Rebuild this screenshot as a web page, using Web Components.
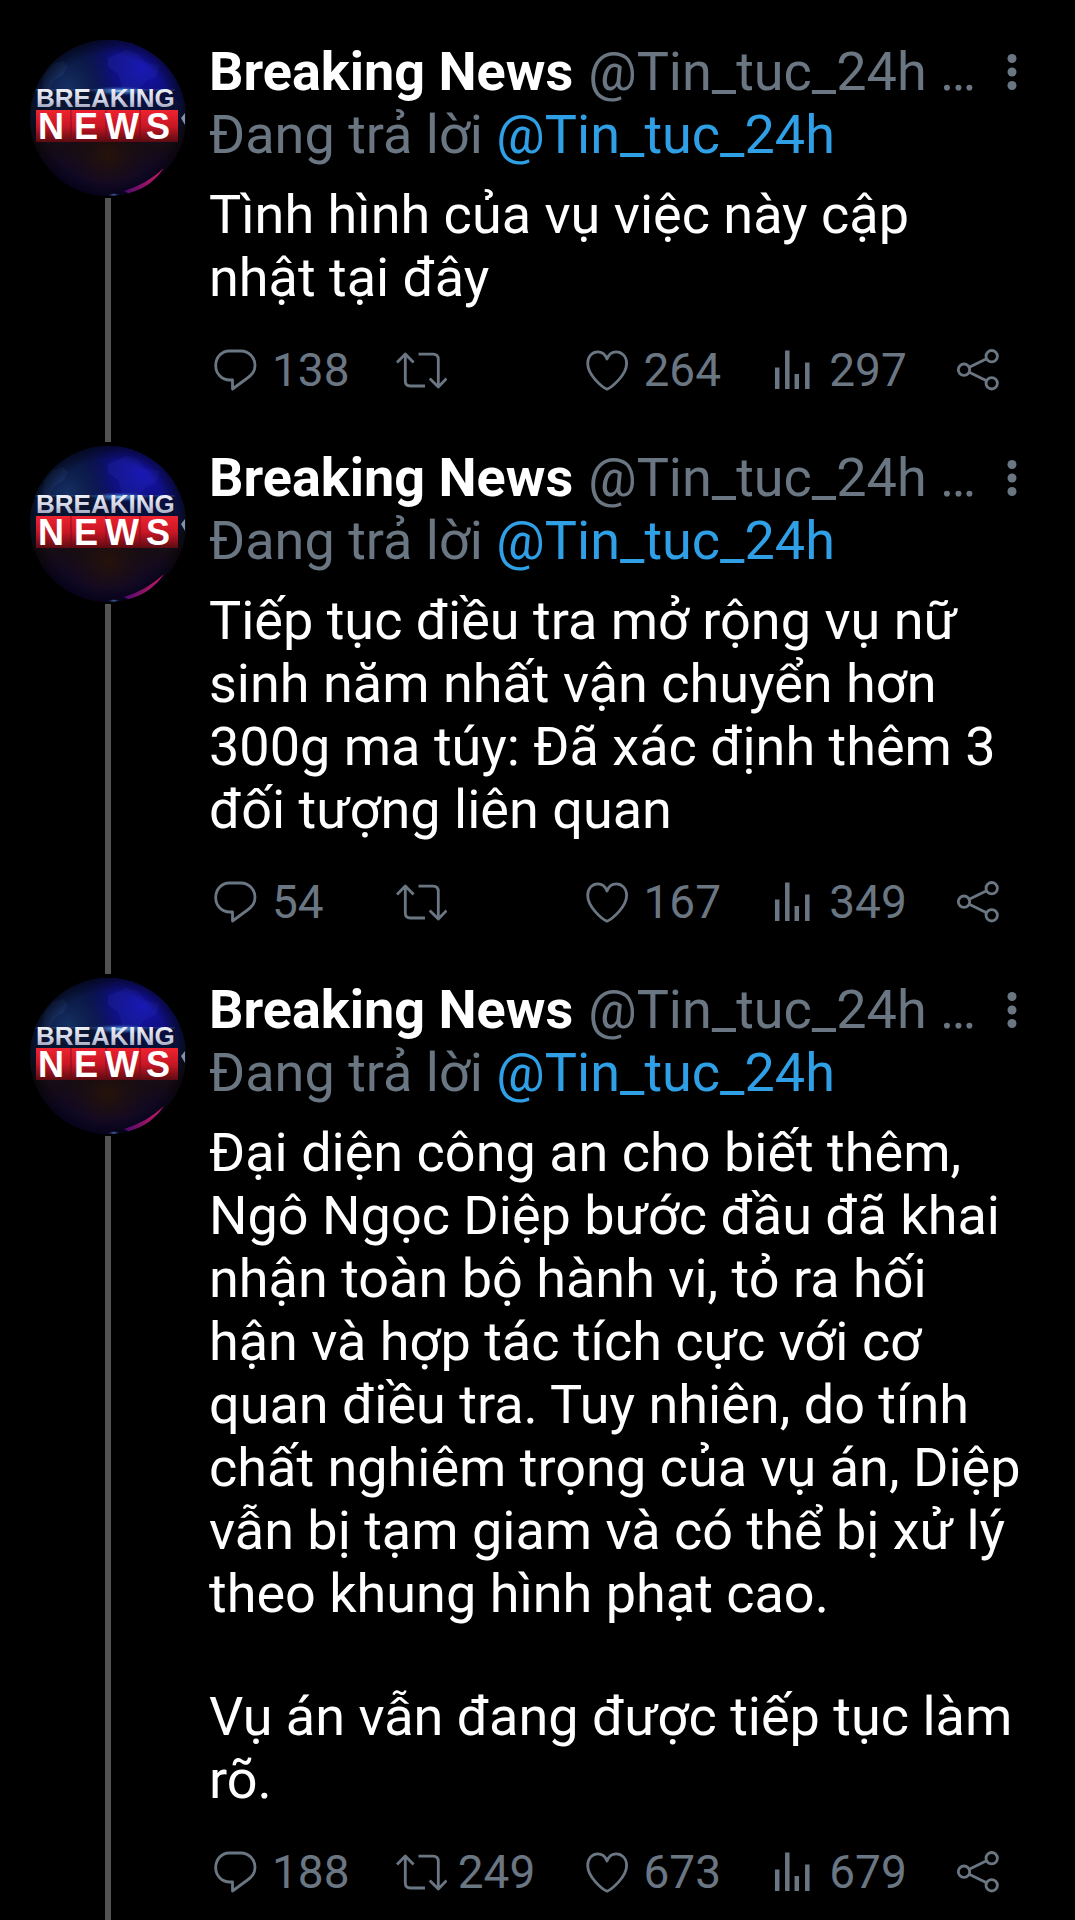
<!DOCTYPE html>
<html lang="vi">
<head>
<meta charset="utf-8">
<meta name="viewport" content="width=device-width, initial-scale=1">
<title>Breaking News</title>
<style>
body {
  --muted: #6b7683;
  --link: #2f9fe6;
  --thread: #525252;
  margin: 0;
  background: #000;
  color: #fff;
  font-family: Roboto, "Noto Sans", sans-serif;
  font-size: 54px;
  line-height: 63px;
}
p { margin: 0; }
p + p { margin-top: 60px; }
</style>
</head>
<body>
<tweet-thread>
  <tweet-item replies="138" likes="264" views="297">
    <p>Tình hình của vụ việc này cập nhật tại đây</p>
  </tweet-item>
  <tweet-item replies="54" likes="167" views="349">
    <p>Tiếp tục điều tra mở rộng vụ nữ sinh năm nhất vận chuyển hơn 300g ma túy: Đã xác định thêm 3 đối tượng liên quan</p>
  </tweet-item>
  <tweet-item replies="188" retweets="249" likes="673" views="679">
    <p>Đại diện công an cho biết thêm, Ngô Ngọc Diệp bước đầu đã khai nhận toàn bộ hành vi, tỏ ra hối hận và hợp tác tích cực với cơ quan điều tra. Tuy nhiên, do tính chất nghiêm trọng của vụ án, Diệp vẫn bị tạm giam và có thể bị xử lý theo khung hình phạt cao.</p>
    <p>Vụ án vẫn đang được tiếp tục làm rõ.</p>
  </tweet-item>
</tweet-thread>

<script>
const ICONS = {
  reply: '<path d="M20 7h12c8 0 14 6.500 14 14.500c0 5.500-2.500 9-7.500 12.500L23.500 45V36H21C12.500 36 6.700 29.500 6.700 21.500S12.500 7 20 7z"/>',
  retweet: '<path d="M2 18.500L10.300 10l8.300 8.500M10.300 10v27q0 5 5 5H30M23.500 10.200H38q5.300 0 5.300 5.300V43M34.700 34.500L43.300 43l8.300-8.500"/>',
  like: '<path d="M26 45.200C21 43 6.700 31 6.700 19.500C6.700 12 11.500 7.900 16.800 7.900C21 7.900 24.500 11 26 15C27.500 11 31 7.900 35.200 7.900C40.500 7.900 45.600 12 45.600 19.500C45.600 31 31 43 26 45.200z"/>',
  views: '<path stroke-width="4.500" d="M11.200 23.500V45M21.300 6.500V45M30.800 30V45M41.300 18.500V45"/>',
  share: '<circle cx="12" cy="25.700" r="5.700"/><circle cx="39.700" cy="12.200" r="5.700"/><circle cx="39.700" cy="39.300" r="5.700"/><path d="M17.200 23.200L34.600 14.700M17.200 28.200L34.600 36.800"/>',
};

const LABELS = {
  reply: 'Trả lời', retweet: 'Tweet lại', like: 'Thích',
  views: 'Lượt xem', share: 'Chia sẻ',
};

class NewsAvatar extends HTMLElement {
  constructor() {
    super();
    this.attachShadow({ mode: 'open' }).innerHTML = `<style>
:host { display: block; width: 156px; height: 156px; border-radius: 50%; overflow: hidden; }
svg { display: block; width: 100%; height: 100%; }
.top { font: bold 26px "Liberation Sans", sans-serif; }
.bottom { font: bold 36px "Liberation Sans", sans-serif; text-anchor: middle; }
</style>
<svg viewBox="0 0 156 156" role="img" aria-label="Breaking News">
  <defs>
    <linearGradient id="sky" x1="0" y1="0" x2="0" y2="1">
      <stop offset="0" stop-color="#081242"/><stop offset=".42" stop-color="#0b1a40"/>
      <stop offset=".68" stop-color="#160c14"/><stop offset="1" stop-color="#08033c"/>
    </linearGradient>
    <radialGradient id="blue" cx=".72" cy=".18" r=".42">
      <stop offset="0" stop-color="#1612b4"/><stop offset=".5" stop-color="#100e88" stop-opacity=".8"/><stop offset="1" stop-color="#0a0a50" stop-opacity="0"/>
    </radialGradient>
    <radialGradient id="brown" cx=".5" cy=".74" r=".34">
      <stop offset="0" stop-color="#25120a"/><stop offset="1" stop-color="#180c14" stop-opacity="0"/>
    </radialGradient>
    <radialGradient id="teal" cx=".24" cy=".3" r=".3">
      <stop offset="0" stop-color="#18366c" stop-opacity=".8"/><stop offset="1" stop-color="#0c1c48" stop-opacity="0"/>
    </radialGradient>
    <radialGradient id="edge">
      <stop offset=".82" stop-opacity="0"/><stop offset="1" stop-opacity=".5"/>
    </radialGradient>
    <radialGradient id="flare">
      <stop offset="0" stop-color="#b8e4ff"/><stop offset=".3" stop-color="#5c98e0" stop-opacity=".7"/><stop offset="1" stop-color="#2048a0" stop-opacity="0"/>
    </radialGradient>
    <linearGradient id="red" x1="0" y1="0" x2="0" y2="1">
      <stop offset="0" stop-color="#ee2330"/><stop offset=".5" stop-color="#c91725"/><stop offset="1" stop-color="#5c0b12"/>
    </linearGradient>
    <linearGradient id="steel" x1="0" y1="0" x2="0" y2="1">
      <stop offset="0" stop-color="#fff"/><stop offset=".6" stop-color="#ccd0e2"/><stop offset="1" stop-color="#8286a6"/>
    </linearGradient>
    <linearGradient id="rim"><stop offset="0" stop-color="#4a0a70"/><stop offset="1" stop-color="#d01c58"/></linearGradient>
  </defs>
  <rect width="156" height="156" fill="url(#sky)"/>
  <rect width="156" height="156" fill="url(#blue)"/>
  <rect width="156" height="156" fill="url(#teal)"/>
  <rect width="156" height="156" fill="url(#brown)"/>
  <path d="M15 34l8-10 10-3 5 5-5 9-8 5-7 11-7 1z" fill="#2c4d80" opacity=".25"/>
  <path d="M78 18l18-8 12 3 8 10 14 2-4 12-10 4-7 8H93l-5-15-10-7z" fill="#2430b8" opacity=".25"/>
  <rect width="156" height="156" fill="url(#edge)"/>
  <rect x="5" y="50" width="140" height="20" fill="#081025" opacity=".65"/>
  <path d="M5 50h140" stroke="#496ea6" opacity=".5"/>
  <ellipse cx="90" cy="51" rx="32" ry="5" fill="url(#flare)"/>
  <text class="top" x="6" y="67" fill="url(#steel)">BREAKING</text>
  <path d="M6 70h142v32H6z" fill="url(#red)"/>
  <path d="M41 70v32M76 70v32M110 70v32" stroke="#650c16" opacity=".7"/>
  <text class="bottom" x="21 56 92 128" y="99" fill="#fff">NEWS</text>
  <path d="M151 78l4-5v12z" fill="#8490ad"/>
  <path d="M94 151q23-7 40-23q-12 18-34 26z" fill="url(#rim)"/>
  <ellipse cx="84" cy="155" rx="6" ry="2" fill="url(#flare)" opacity=".7"/>
</svg>`;
  }
}

class TweetAction extends HTMLElement {
  connectedCallback() {
    const kind = this.getAttribute('kind');
    const count = this.getAttribute('count') ?? '';
    if (!this.shadowRoot) this.attachShadow({ mode: 'open' });
    this.shadowRoot.innerHTML = `<style>
:host { display: block; }
button {
  display: flex; align-items: center; gap: 11px;
  padding: 0; border: 0; background: none; cursor: pointer;
  color: var(--muted); font: inherit; font-size: 46px; line-height: 52px;
}
svg {
  flex: none; width: 52px; height: 52px;
  fill: none; stroke: currentColor; stroke-width: 2.8;
  stroke-linecap: butt; stroke-linejoin: round;
}
</style>
<button type="button" aria-label="${LABELS[kind]} ${count}">
  <svg viewBox="0 0 52 52" aria-hidden="true">${ICONS[kind]}</svg>${count ? `<span>${count}</span>` : ''}
</button>`;
  }
}

class TweetItem extends HTMLElement {
  connectedCallback() {
    const n = (name) => this.getAttribute(name) ?? '';
    if (!this.shadowRoot) this.attachShadow({ mode: 'open' });
    this.shadowRoot.innerHTML = `<style>
:host { display: block; }
article { display: flex; gap: 23px; padding: 0 45px 0 30px; }
.side { flex: none; display: flex; flex-direction: column; align-items: center; gap: 2px; padding-top: 3px; }
.line { flex: 1; width: 6px; margin-bottom: 1px; background: var(--thread); }
.main { flex: 1; min-width: 0; padding: 3px 0 47px; }
header { display: flex; align-items: center; }
.who { flex: 1; min-width: 0; white-space: nowrap; }
.who a { color: inherit; }
a { text-decoration: none; color: var(--link); }
.handle, .to { color: var(--muted); }
.handle { margin-left: 15px; }
.menu {
  flex: none; display: flex; justify-content: center; width: 36px;
  padding: 0; border: 0; background: none; color: var(--muted); cursor: pointer;
}
.menu svg { display: block; width: 10px; height: 36px; fill: currentColor; }
.text { margin: 17px 0 35px; padding-right: 8px; }
.actions { display: grid; grid-template-columns: repeat(4, 1fr) 52px; margin-right: 26px; }
</style>
<article>
  <div class="side"><news-avatar></news-avatar><div class="line"></div></div>
  <div class="main">
    <header>
      <div class="who"><a href="#profile"><b>Breaking News</b><span class="handle">@Tin_tuc_24h …</span></a></div>
      <button class="menu" type="button" aria-label="Thêm">
        <svg viewBox="0 0 10 36" aria-hidden="true"><circle cx="5" cy="4.500" r="4.500"/><circle cx="5" cy="18" r="4.500"/><circle cx="5" cy="31.500" r="4.500"/></svg>
      </button>
    </header>
    <div class="to">Đang trả lời <a href="#profile">@Tin_tuc_24h</a></div>
    <div class="text"><slot></slot></div>
    <div class="actions">
      <tweet-action kind="reply" count="${n('replies')}"></tweet-action>
      <tweet-action kind="retweet" count="${n('retweets')}"></tweet-action>
      <tweet-action kind="like" count="${n('likes')}"></tweet-action>
      <tweet-action kind="views" count="${n('views')}"></tweet-action>
      <tweet-action kind="share"></tweet-action>
    </div>
  </div>
</article>`;
  }
}

class TweetThread extends HTMLElement {
  constructor() {
    super();
    this.attachShadow({ mode: 'open' }).innerHTML = `<style>
:host { display: block; padding-top: 37px; }
</style><main><slot></slot></main>`;
  }
}

customElements.define('news-avatar', NewsAvatar);
customElements.define('tweet-action', TweetAction);
customElements.define('tweet-item', TweetItem);
customElements.define('tweet-thread', TweetThread);
</script>
</body>
</html>
